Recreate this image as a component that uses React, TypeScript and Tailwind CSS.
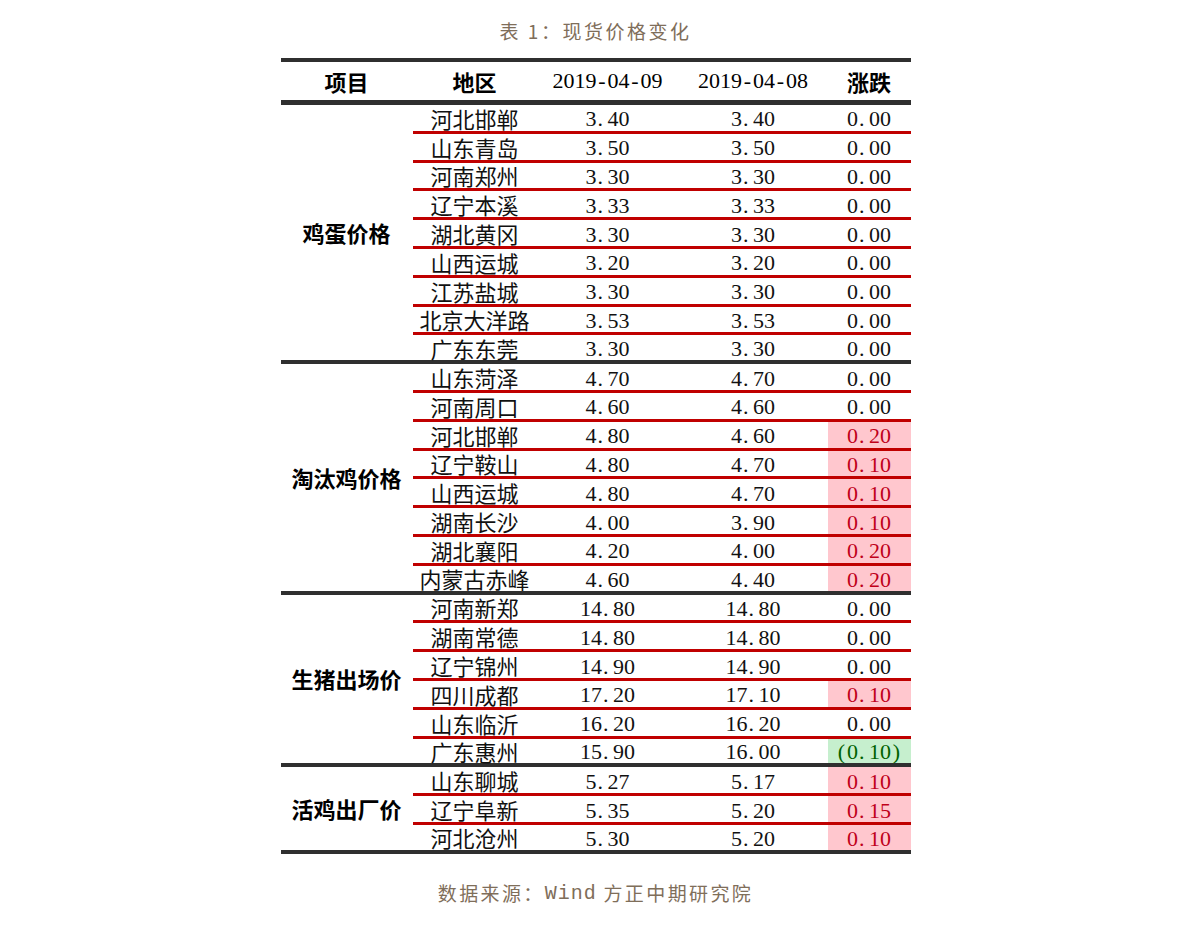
import React from "react";

type Row = { region: string; a: string; b: string; c: string; trend?: "up" | "down" };
type Group = { label: string; rows: Row[] };

const groups: Group[] = [
  {
    label: "鸡蛋价格",
    rows: [
      { region: "河北邯郸", a: "3.40", b: "3.40", c: "0.00" },
      { region: "山东青岛", a: "3.50", b: "3.50", c: "0.00" },
      { region: "河南郑州", a: "3.30", b: "3.30", c: "0.00" },
      { region: "辽宁本溪", a: "3.33", b: "3.33", c: "0.00" },
      { region: "湖北黄冈", a: "3.30", b: "3.30", c: "0.00" },
      { region: "山西运城", a: "3.20", b: "3.20", c: "0.00" },
      { region: "江苏盐城", a: "3.30", b: "3.30", c: "0.00" },
      { region: "北京大洋路", a: "3.53", b: "3.53", c: "0.00" },
      { region: "广东东莞", a: "3.30", b: "3.30", c: "0.00" },
    ],
  },
  {
    label: "淘汰鸡价格",
    rows: [
      { region: "山东菏泽", a: "4.70", b: "4.70", c: "0.00" },
      { region: "河南周口", a: "4.60", b: "4.60", c: "0.00" },
      { region: "河北邯郸", a: "4.80", b: "4.60", c: "0.20", trend: "up" },
      { region: "辽宁鞍山", a: "4.80", b: "4.70", c: "0.10", trend: "up" },
      { region: "山西运城", a: "4.80", b: "4.70", c: "0.10", trend: "up" },
      { region: "湖南长沙", a: "4.00", b: "3.90", c: "0.10", trend: "up" },
      { region: "湖北襄阳", a: "4.20", b: "4.00", c: "0.20", trend: "up" },
      { region: "内蒙古赤峰", a: "4.60", b: "4.40", c: "0.20", trend: "up" },
    ],
  },
  {
    label: "生猪出场价",
    rows: [
      { region: "河南新郑", a: "14.80", b: "14.80", c: "0.00" },
      { region: "湖南常德", a: "14.80", b: "14.80", c: "0.00" },
      { region: "辽宁锦州", a: "14.90", b: "14.90", c: "0.00" },
      { region: "四川成都", a: "17.20", b: "17.10", c: "0.10", trend: "up" },
      { region: "山东临沂", a: "16.20", b: "16.20", c: "0.00" },
      { region: "广东惠州", a: "15.90", b: "16.00", c: "(0.10)", trend: "down" },
    ],
  },
  {
    label: "活鸡出厂价",
    rows: [
      { region: "山东聊城", a: "5.27", b: "5.17", c: "0.10", trend: "up" },
      { region: "辽宁阜新", a: "5.35", b: "5.20", c: "0.15", trend: "up" },
      { region: "河北沧州", a: "5.30", b: "5.20", c: "0.10", trend: "up" },
    ],
  },
];

const cjk = "font-['Noto_Sans_CJK_SC',sans-serif]";
const serif = "font-['Liberation_Serif','Noto_Sans_CJK_SC',serif]";

// half-width cells so digits, dots and brackets line up like the original
function Num({ v }: { v: string }) {
  return (
    <span className={`inline-flex ${serif}`}>
      {v.split("").map((ch, i) => (
        <span
          key={i}
          className={`inline-block w-[11px] ${ch === "." ? "text-left pl-[1px]" : "text-center"}`}
        >
          {ch}
        </span>
      ))}
    </span>
  );
}

function DataRow({ row, last }: { row: Row; last: boolean }) {
  const trendCls =
    row.trend === "up"
      ? "bg-[#ffc7ce] text-[#c0001a]"
      : row.trend === "down"
      ? "bg-[#c6efce] text-[#006100]"
      : "text-[#111]";
  return (
    <div
      className={`flex text-[22px] leading-none ${
        last ? "h-[24.8px]" : "h-[28.8px] border-b-[3px] border-[#c00000]"
      }`}
    >
      <div className={`w-[124px] flex items-center justify-center text-[#111] ${cjk}`}>
        {row.region}
      </div>
      <div className="w-[142px] flex items-center justify-center pt-[3px] text-[#111]">
        <Num v={row.a} />
      </div>
      <div className="w-[149px] flex items-center justify-center pt-[3px] text-[#111]">
        <Num v={row.b} />
      </div>
      <div className={`w-[83px] flex items-center justify-center pt-[3px] ${trendCls}`}>
        <Num v={row.c} />
      </div>
    </div>
  );
}

export default function App() {
  return (
    <div className="w-full min-h-screen bg-white flex flex-col items-center">
      <div
        className={`h-[58px] pt-[5px] flex items-center justify-center text-[19px] tracking-[2.5px] text-[#7f6e5a] ${cjk}`}
      >
        表 1：现货价格变化
      </div>

      <div className="w-[630px]">
        <div className="flex h-[47px] border-t-[4px] border-b-[5px] border-[#2f2f2f] text-[22px] leading-none text-black">
          <div className={`w-[132px] flex items-center justify-center font-bold ${cjk}`}>项目</div>
          <div className={`w-[124px] flex items-center justify-center font-bold ${cjk}`}>地区</div>
          <div className="w-[142px] flex items-center justify-center">
            <Num v="2019-04-09" />
          </div>
          <div className="w-[149px] flex items-center justify-center">
            <Num v="2019-04-08" />
          </div>
          <div className={`w-[83px] flex items-center justify-center font-bold ${cjk}`}>涨跌</div>
        </div>

        {groups.map((g) => (
          <div key={g.label} className="flex border-b-[4px] border-[#2f2f2f]">
            <div
              className={`w-[132px] flex items-center justify-center text-[22px] font-bold text-black ${cjk}`}
            >
              {g.label}
            </div>
            <div className="flex flex-col">
              {g.rows.map((r, i) => (
                <DataRow key={i} row={r} last={i === g.rows.length - 1} />
              ))}
            </div>
          </div>
        ))}
      </div>

      <div
        className={`h-[80px] flex items-center justify-center text-[19px] tracking-[2.4px] text-[#7f6e5a] ${cjk}`}
      >
        数据来源：<span className="font-['Liberation_Mono',monospace] text-[20px] tracking-[1px]">Wind</span>&nbsp;方正中期研究院
      </div>
    </div>
  );
}
